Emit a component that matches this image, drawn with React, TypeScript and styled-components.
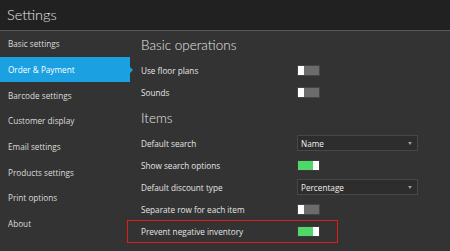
import React from "react";
import styled, { createGlobalStyle } from "styled-components";

const Global = createGlobalStyle`
  html, body { margin: 0; padding: 0; background: #333333; }
  body { font-family: "Open Sans", "Liberation Sans", sans-serif; color: #e8e8e8; }
  * { box-sizing: border-box; }
`;

const Page = styled.div`
  width: 450px;
  height: 251px;
  overflow: hidden;
  background: #333333;
  display: flex;
  flex-direction: column;
`;

const Header = styled.header`
  height: 31px;
  background: #212121;
  border-bottom: 1px solid #5a5a5a;
  display: flex;
  align-items: center;
  padding: 0 0 1px 7px;
`;

const Title = styled.h1`
  margin: 0;
  font-family: Lato, "Open Sans", sans-serif;
  font-size: 14.5px;
  font-weight: 300;
  color: #e6e6e6;
`;

const Body = styled.div`
  flex: 1;
  display: flex;
`;

const Sidebar = styled.nav`
  width: 130px;
  display: flex;
  flex-direction: column;
`;

const NavItem = styled.div<{ $active?: boolean }>`
  position: relative;
  height: 25.7px;
  display: flex;
  align-items: center;
  padding-left: 8px;
  font-size: 8.2px;
  color: ${(p) => (p.$active ? "#ffffff" : "#dcdcdc")};
  background: ${(p) => (p.$active ? "#1ba1e2" : "transparent")};
  &::after {
    content: "";
    display: ${(p) => (p.$active ? "block" : "none")};
    position: absolute;
    right: -3px;
    top: 50%;
    margin-top: -3px;
    border-top: 3px solid transparent;
    border-bottom: 3px solid transparent;
    border-left: 3px solid #1ba1e2;
  }
`;

const Content = styled.main`
  flex: 1;
  padding-left: 11px;
  display: flex;
  flex-direction: column;
`;

const SectionTitle = styled.h2<{ $h: number }>`
  margin: 0;
  height: ${(p) => p.$h}px;
  display: flex;
  align-items: center;
  font-family: Lato, "Open Sans", sans-serif;
  font-size: 13.5px;
  font-weight: 300;
  color: #e6e6e6;
`;

const Row = styled.div`
  position: relative;
  height: 22px;
  display: grid;
  grid-template-columns: 156px 121px;
  align-items: center;
  font-size: 8.2px;
  color: #e4e4e4;
`;

const Highlight = styled.div`
  position: absolute;
  left: -14px;
  top: 0;
  width: 211px;
  height: 23px;
  border: 1px solid #e21b1b;
  pointer-events: none;
`;

const Toggle = styled.div<{ $on?: boolean }>`
  width: 23px;
  height: 11px;
  border: 1px solid ${(p) => (p.$on ? "#3a3a3a" : "#454545")};
  background: ${(p) => (p.$on ? "#4fd867" : "#6c6c6c")};
  display: flex;
  justify-content: ${(p) => (p.$on ? "flex-end" : "flex-start")};
  &::before {
    content: "";
    width: 6px;
    height: 100%;
    background: #ffffff;
  }
`;

const Select = styled.div`
  width: 121px;
  height: 16px;
  border: 1px solid #474747;
  background: #2d2d2d;
  display: flex;
  align-items: center;
  justify-content: space-between;
  padding: 0 5px 0 3px;
  font-size: 8.2px;
  color: #f0f0f0;
  &::after {
    content: "";
    border-left: 2.5px solid transparent;
    border-right: 2.5px solid transparent;
    border-top: 3px solid #9a9a9a;
  }
`;

const nav = [
  "Basic settings",
  "Order & Payment",
  "Barcode settings",
  "Customer display",
  "Email settings",
  "Products settings",
  "Print options",
  "About",
];

export default function App() {
  return (
    <Page>
      <Global />
      <Header>
        <Title>Settings</Title>
      </Header>
      <Body>
        <Sidebar>
          {nav.map((n) => (
            <NavItem key={n} $active={n === "Order & Payment"}>
              {n}
            </NavItem>
          ))}
        </Sidebar>
        <Content>
          <SectionTitle $h={28}>Basic operations</SectionTitle>
          <Row>
            <span>Use floor plans</span>
            <Toggle />
          </Row>
          <Row>
            <span>Sounds</span>
            <Toggle />
          </Row>
          <SectionTitle $h={29}>Items</SectionTitle>
          <Row>
            <span>Default search</span>
            <Select>Name</Select>
          </Row>
          <Row>
            <span>Show search options</span>
            <Toggle $on />
          </Row>
          <Row>
            <span>Default discount type</span>
            <Select>Percentage</Select>
          </Row>
          <Row>
            <span>Separate row for each item</span>
            <Toggle />
          </Row>
          <Row>
            <span>Prevent negative inventory</span>
            <Toggle $on />
            <Highlight />
          </Row>
        </Content>
      </Body>
    </Page>
  );
}
